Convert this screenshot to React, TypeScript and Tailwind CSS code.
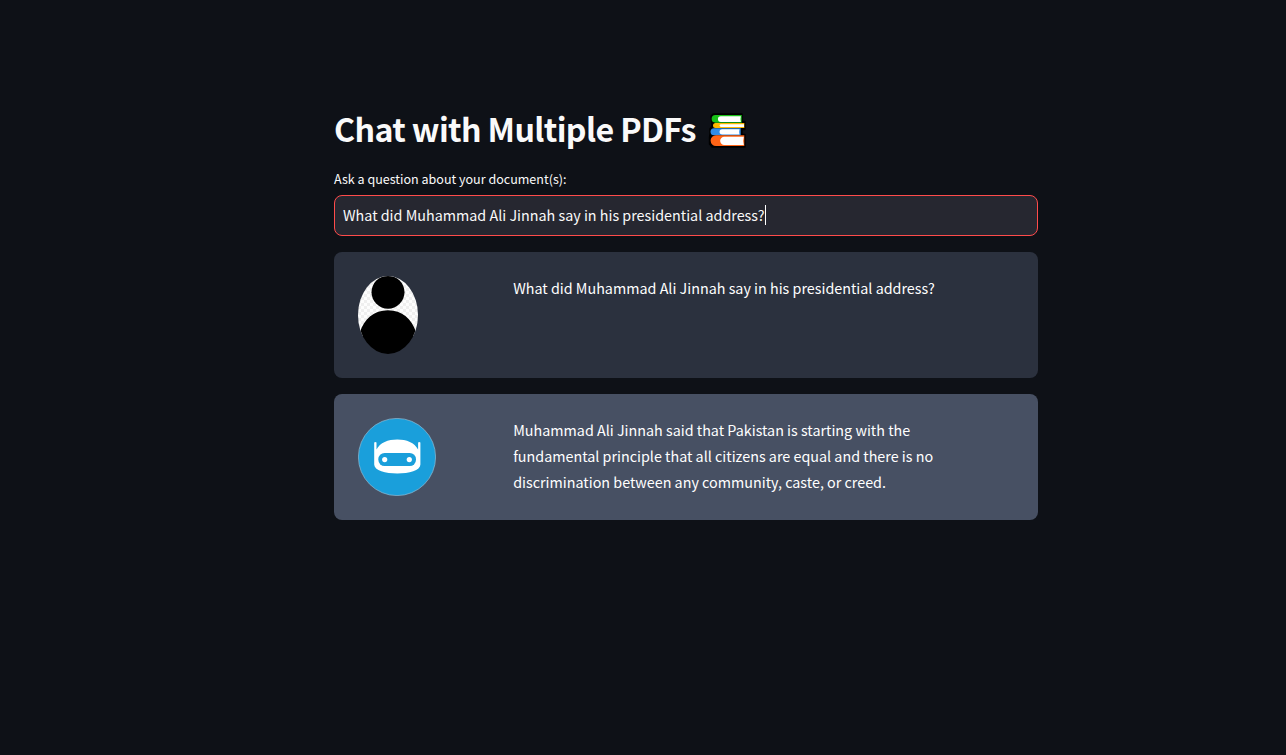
import type { ReactNode } from 'react';

function Books() {
  return (
    <svg viewBox="0 0 38 36" className="h-9 w-[38px] shrink-0" aria-label="Books">
      <path
        d="M5 2H34V9.5H37V17.5H34V22.5H37V35H4L1.5 32V25L2 22V17L4 14L3.500 10L3 4Z"
        fill="#000"
        stroke="#000"
        strokeWidth="1.4"
        strokeLinejoin="round"
      />
      <path d="M7.500 3H33.700V10.700H7.500A3.850 3.850 0 0 1 7.500 3Z" fill="#18c018" />
      <path d="M12.800 4.200H32.900Q32 7 32.900 9.900H12.800A2.850 2.850 0 0 1 12.800 4.200Z" fill="#fff" />
      <path d="M7.500 11H36.300V16H7.500A2.500 2.500 0 0 1 7.500 11Z" fill="#ffb800" />
      <path d="M13 12.200H36V14.900H13A1.350 1.350 0 0 1 13 12.200Z" fill="#fff" />
      <path d="M6 16.300H32.700V23.300H6A3.500 3.500 0 0 1 6 16.300Z" fill="#2f8ce8" />
      <path d="M14.200 17.200H31.500Q30.800 19.800 31.500 22.500H14.200A2.650 2.650 0 0 1 14.200 17.200Z" fill="#fff" />
      <path d="M8 23.200H36.300V34H8A5.400 5.400 0 0 1 8 23.200Z" fill="#ff6416" />
      <path d="M16.300 24.700H35.800Q34.600 28.800 35.800 33H16.300A4.150 4.150 0 0 1 16.300 24.700Z" fill="#fff" />
    </svg>
  );
}

function UserAvatar() {
  return (
    <svg viewBox="0 0 60 78" className="h-[78px] w-[60px]">
      <defs>
        <pattern id="check" width="6" height="6" patternUnits="userSpaceOnUse">
          <rect width="6" height="6" fill="#fdfdfd" />
          <path d="M0 0H3V3H0ZM3 3H6V6H3Z" fill="#efefef" />
        </pattern>
        <clipPath id="oval">
          <ellipse cx="30" cy="39" rx="30" ry="39" />
        </clipPath>
      </defs>
      <g clipPath="url(#oval)">
        <path d="M0 0H60V60H0Z" fill="url(#check)" />
        <circle cx="30" cy="16.2" r="16.5" />
        <path d="M2 56C6 43 16 34.2 30 34.2S54 43 58 56L60 60V78H0V60Z" />
      </g>
    </svg>
  );
}

function BotAvatar() {
  return (
    <svg viewBox="0 0 78 78" className="size-[78px]">
      <circle cx="39" cy="39" r="38.6" fill="#1a9fdb" stroke="#8ebcd6" strokeWidth="0.7" />
      <path
        d="M16.2 24.5Q17.4 23.5 18.5 24.5V31.5C22 24.5 30 21.4 39.3 21.4S56.5 24.5 60.1 31.5V24.5Q61.2 23.5 62.4 24.5V46.5C62.4 52.5 51 55.5 39.3 55.5S16.2 52.5 16.2 46.5Z"
        fill="#fff"
      />
      <rect x="20.3" y="35" width="37.7" height="13" rx="6.3" fill="#1a9fdb" />
      <circle cx="26.7" cy="41.6" r="2.6" fill="#fff" />
      <circle cx="51.3" cy="41.6" r="2.6" fill="#fff" />
    </svg>
  );
}

function Message({ avatar, tone, children }: { avatar: ReactNode; tone: string; children: ReactNode }) {
  return (
    <div className={`flex h-[126px] rounded-lg p-6 ${tone}`}>
      <div className="w-1/5">{avatar}</div>
      <div className="-mt-px w-4/5 whitespace-nowrap px-6 text-[14.33px] leading-[26px] text-white">{children}</div>
    </div>
  );
}

export default function App() {
  return (
    <div className="min-h-screen bg-[#0e1117] pl-[334px] pt-[108px] font-['Noto_Sans_CJK_SC',sans-serif] text-[#fafafa]">
      <main className="w-[704px]">
        <h1 className="flex h-11 items-center gap-3 whitespace-nowrap text-[32.2px] font-semibold leading-[44px] tracking-[-0.64px]">
          <span className="pb-1">Chat with Multiple PDFs</span>
          <Books />
        </h1>
        <label className="mt-4 flex h-[23px] items-center text-[12.54px]">
          <span>Ask a question about your document(s):</span>
        </label>
        <div className="mt-1 flex h-[41px] items-center rounded-lg border border-[#ff4b4b] bg-[#262730] px-2 pb-0.5 text-[14.33px]">
          <span className="whitespace-nowrap">What did Muhammad Ali Jinnah say in his presidential address?</span>
          <span className="h-5 w-px bg-white" />
        </div>
        <div className="mt-4 flex flex-col gap-4">
          <Message avatar={<UserAvatar />} tone="bg-[#2b313e]">
            What did Muhammad Ali Jinnah say in his presidential address?
          </Message>
          <Message avatar={<BotAvatar />} tone="bg-[#475063]">
            Muhammad Ali Jinnah said that Pakistan is starting with the
            <br />
            fundamental principle that all citizens are equal and there is no
            <br />
            discrimination between any community, caste, or creed.
          </Message>
        </div>
      </main>
    </div>
  );
}
